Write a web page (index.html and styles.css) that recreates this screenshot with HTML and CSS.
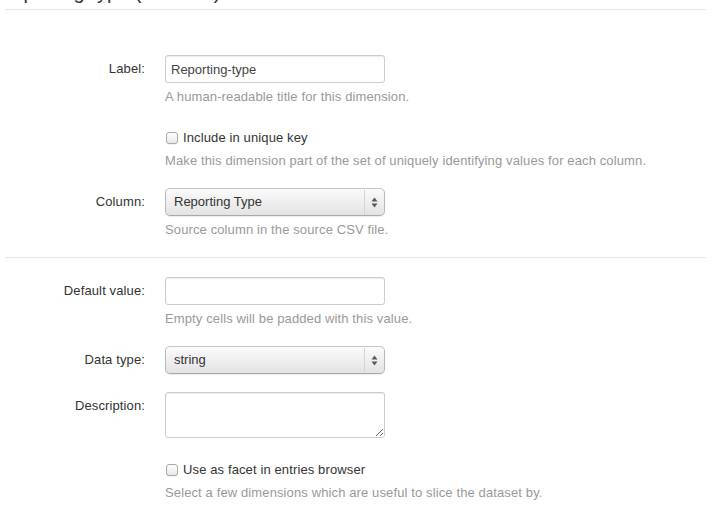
FILE: index.html
```html
<!DOCTYPE html>
<html>
<head>
<meta charset="utf-8">
<link rel="stylesheet" href="styles.css">
</head>
<body>
<form class="form-horizontal">
  <div class="legend">Reporting-type (attribute)</div>

  <div class="control-group">
    <label class="control-label">Label:</label>
    <div class="controls">
      <input type="text" class="text-input" value="Reporting-type">
      <p class="help-block">A human-readable title for this dimension.</p>
    </div>
  </div>

  <div class="control-group">
    <div class="controls">
      <label class="checkbox"><input type="checkbox" class="check"> Include in unique key</label>
      <p class="help-block">Make this dimension part of the set of uniquely identifying values for each column.</p>
    </div>
  </div>

  <div class="control-group">
    <label class="control-label">Column:</label>
    <div class="controls">
      <span class="select-wrap">
        <select class="select"><option>Reporting Type</option></select>
        <svg class="arrows" width="7" height="11" viewBox="0 0 7 11"><path d="M3.5 0.5 L6.5 4.5 L0.5 4.5 Z M3.5 10.5 L6.5 6.5 L0.5 6.5 Z" fill="#5a5a5a"/></svg>
      </span>
      <p class="help-block">Source column in the source CSV file.</p>
    </div>
  </div>

  <hr class="divider">

  <div class="control-group">
    <label class="control-label">Default value:</label>
    <div class="controls">
      <input type="text" class="text-input" value="">
      <p class="help-block">Empty cells will be padded with this value.</p>
    </div>
  </div>

  <div class="control-group">
    <label class="control-label">Data type:</label>
    <div class="controls">
      <span class="select-wrap">
        <select class="select"><option>string</option></select>
        <svg class="arrows" width="7" height="11" viewBox="0 0 7 11"><path d="M3.5 0.5 L6.5 4.5 L0.5 4.5 Z M3.5 10.5 L6.5 6.5 L0.5 6.5 Z" fill="#5a5a5a"/></svg>
      </span>
    </div>
  </div>

  <div class="control-group">
    <label class="control-label">Description:</label>
    <div class="controls">
      <textarea class="textarea" rows="2"></textarea>
    </div>
  </div>

  <div class="control-group">
    <div class="controls">
      <label class="checkbox"><input type="checkbox" class="check"> Use as facet in entries browser</label>
      <p class="help-block">Select a few dimensions which are useful to slice the dataset by.</p>
    </div>
  </div>
</form>
</body>
</html>
```

FILE: styles.css
```css
html, body {
  margin: 0;
  padding: 0;
  background: #fff;
  overflow: hidden;
}
body {
  font-family: "Liberation Sans", Arial, Helvetica, sans-serif;
  font-size: 13px;
  line-height: 18px;
  letter-spacing: 0.12px;
  color: #333;
}
.form-horizontal {
  margin: 0 7px 0 5px;
}
.legend {
  margin-top: -20px;
  font-size: 20px;
  line-height: 24px;
  padding-bottom: 5px;
  text-indent: -7px;
  letter-spacing: 0;
  color: #333;
  border-bottom: 1px solid #e5e5e5;
  margin-bottom: 45px;
}
.control-group {
  display: flex;
  margin-bottom: 18px;
}
.control-label {
  width: 140px;
  padding-top: 5px;
  text-align: right;
  flex: none;
}
.controls {
  margin-left: 20px;
  flex: 1;
}
.control-group > .controls:first-child {
  margin-left: 160px;
}
.text-input {
  box-sizing: border-box;
  display: block;
  width: 220px;
  height: 28px;
  margin: 0;
  padding: 4px 5px;
  font: inherit;
  font-size: 13px;
  color: #444;
  border: 1px solid #ccc;
  border-radius: 3px;
  box-shadow: inset 0 1px 1px rgba(0,0,0,0.075);
  outline: none;
}
.help-block {
  margin: 5px 0 0;
  color: #999;
}
.checkbox {
  display: flex;
  align-items: center;
  padding-top: 5px;
  min-height: 18px;
}
.check {
  -webkit-appearance: none;
  appearance: none;
  box-sizing: border-box;
  width: 12px;
  height: 12px;
  margin: 0 5px 0 1px;
  border: 1px solid #a8a8a8;
  border-radius: 3px;
  background: linear-gradient(#fdfdfd, #e9e9e9);
  box-shadow: 0 0.5px 0.5px rgba(0,0,0,0.1);
}
.select-wrap {
  position: relative;
  display: block;
  width: 220px;
  height: 28px;
}
.select {
  -webkit-appearance: none;
  appearance: none;
  box-sizing: border-box;
  width: 220px;
  height: 28px;
  margin: 0;
  padding: 0 24px 0 8px;
  font: inherit;
  font-size: 13px;
  color: #333;
  border: 1px solid #b9b9b9;
  border-top-color: #c6c6c6;
  border-bottom-color: #a9a9a9;
  border-radius: 5px;
  background: linear-gradient(#fbfbfb, #f0f0f0 45%, #e3e3e3);
  box-shadow: 0 1px 1px rgba(0,0,0,0.08);
  outline: none;
}
.select-wrap::before {
  content: "";
  position: absolute;
  top: 2px;
  bottom: 2px;
  right: 20px;
  width: 1px;
  background: #d4d4d4;
  pointer-events: none;
}
.arrows {
  position: absolute;
  right: 7px;
  top: 9px;
  pointer-events: none;
}
.divider {
  margin: 0 0 18px;
  border: 0;
  border-top: 1px solid #e5e5e5;
  border-bottom: 1px solid #fff;
  height: 0;
}
.textarea {
  box-sizing: border-box;
  display: block;
  width: 220px;
  height: 46px;
  margin: 0;
  padding: 4px 6px;
  font: inherit;
  border: 1px solid #ccc;
  border-radius: 3px;
  box-shadow: inset 0 1px 1px rgba(0,0,0,0.075);
  outline: none;
}
```
